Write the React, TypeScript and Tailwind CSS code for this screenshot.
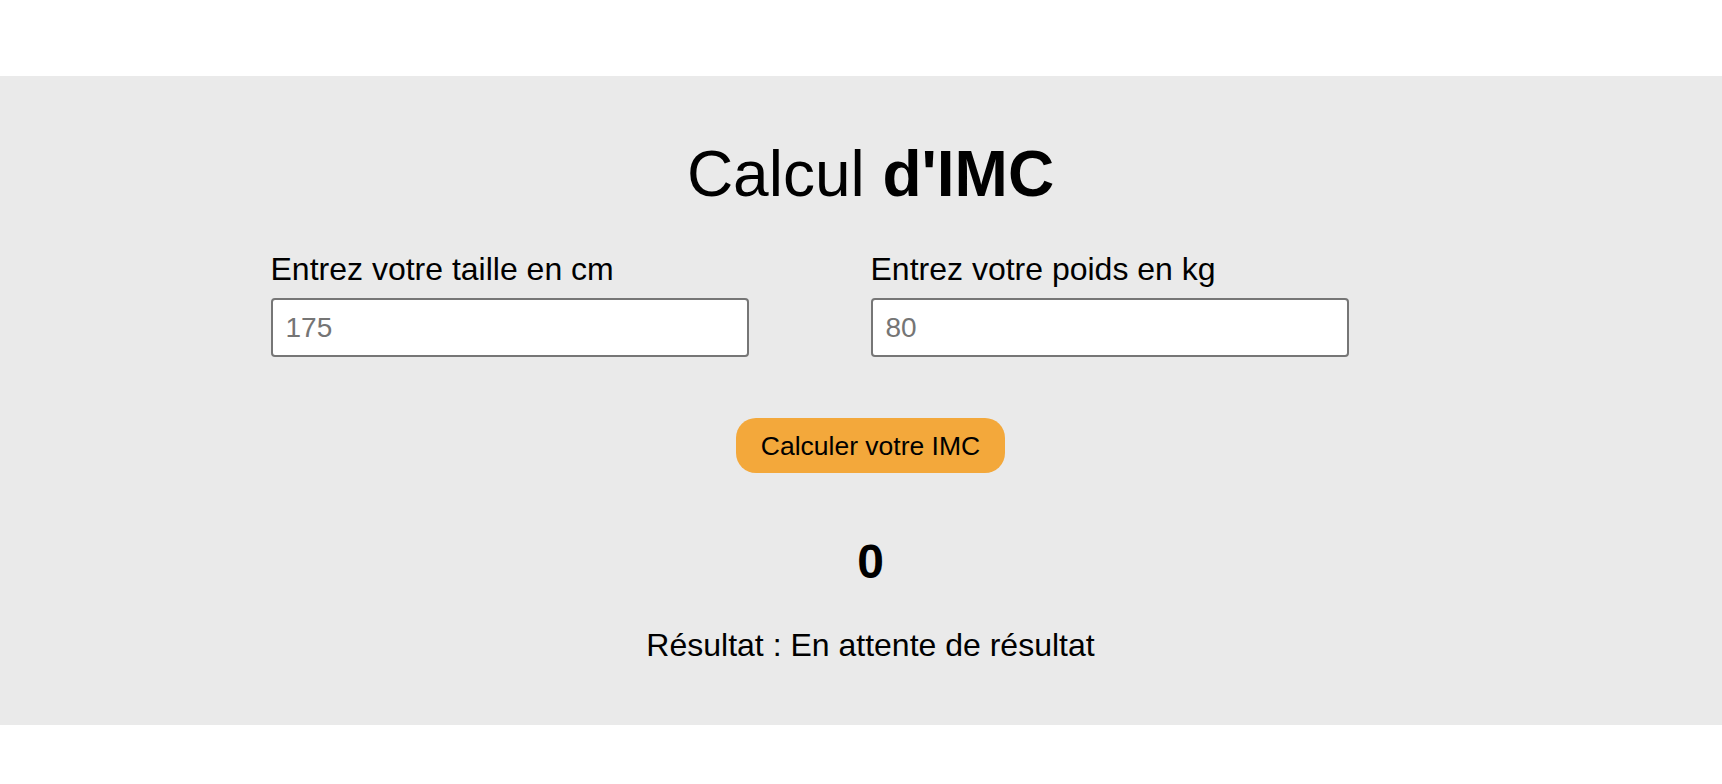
import { useState } from "react"

export default function App() {
  const [taille, setTaille] = useState("")
  const [poids, setPoids] = useState("")
  const [imc, setImc] = useState(0)
  const [resultat, setResultat] = useState("En attente de résultat")

  const calculer = () => {
    const t = parseFloat(taille) / 100
    const p = parseFloat(poids)
    if (!t || !p) {
      setImc(0)
      setResultat("En attente de résultat")
      return
    }
    const value = Math.round((p / (t * t)) * 10) / 10
    setImc(value)
    if (value < 18.5) setResultat("Maigreur")
    else if (value < 25) setResultat("Bonne santé")
    else if (value < 30) setResultat("Surpoids")
    else setResultat("Obésité")
  }

  return (
    <div className="min-h-screen bg-white pt-[76px] font-['Liberation_Sans',Arial,sans-serif] text-black">
      <section className="bg-[#eaeaea] pb-[61px] pl-[19px] pt-[61px]">
        <div className="mx-auto flex w-[1200px] flex-col">
          <h1 className="text-center text-[64px] font-normal leading-[74px]">
            Calcul <strong className="font-bold">d'IMC</strong>
          </h1>

          <div className="mt-[40px] grid grid-cols-2">
            <div className="flex flex-col">
              <label htmlFor="taille" className="text-[32px] leading-[37px]">
                Entrez votre taille en cm
              </label>
              <input
                id="taille"
                type="number"
                placeholder="175"
                value={taille}
                onChange={(e) => setTaille(e.target.value)}
                className="mt-[10px] h-[59px] w-[478px] rounded-[4px] border-2 border-[#767676] bg-white px-[13px] text-[28px] outline-none placeholder:text-[#757575]"
              />
            </div>
            <div className="flex flex-col">
              <label htmlFor="poids" className="text-[32px] leading-[37px]">
                Entrez votre poids en kg
              </label>
              <input
                id="poids"
                type="number"
                placeholder="80"
                value={poids}
                onChange={(e) => setPoids(e.target.value)}
                className="mt-[10px] h-[59px] w-[478px] rounded-[4px] border-2 border-[#767676] bg-white px-[13px] text-[28px] outline-none placeholder:text-[#757575]"
              />
            </div>
          </div>

          <div className="mt-[61px] flex justify-center">
            <button
              onClick={calculer}
              className="h-[55px] rounded-[20px] bg-[#f3a83b] px-[25px] text-[26.5px] leading-[30px] text-black"
            >
              Calculer votre IMC
            </button>
          </div>

          <p className="mt-[61px] text-center text-[48px] font-bold leading-[55px]">
            {imc}
          </p>

          <p className="mt-[38px] text-center text-[32px] leading-[37px]">
            Résultat : {resultat}
          </p>
        </div>
      </section>
    </div>
  )
}
